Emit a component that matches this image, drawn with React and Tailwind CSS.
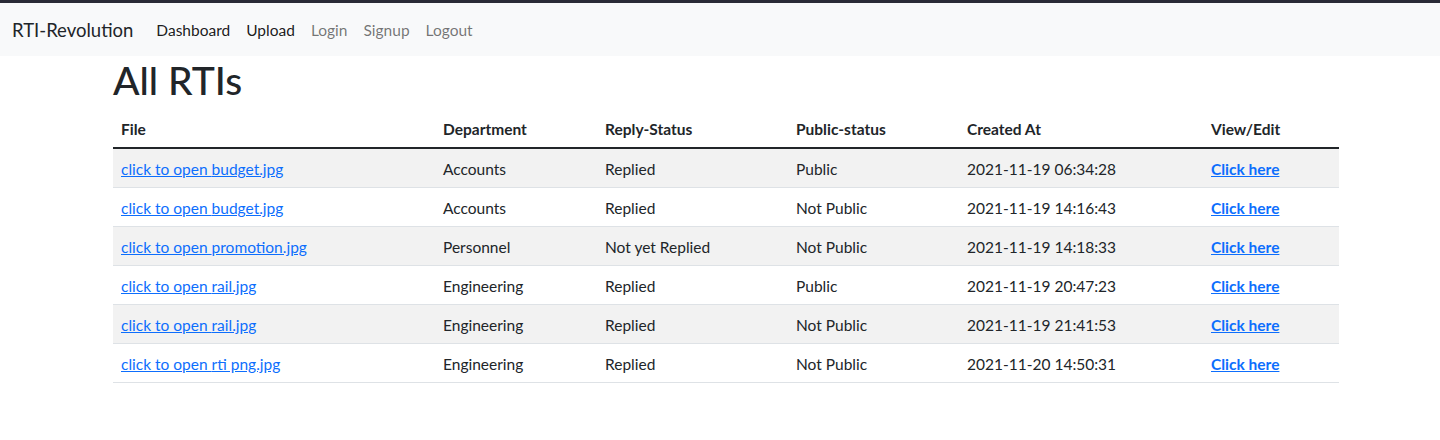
const rows = [
  { file: 'budget.jpg', dept: 'Accounts', reply: 'Replied', pub: 'Public', at: '2021-11-19 06:34:28' },
  { file: 'budget.jpg', dept: 'Accounts', reply: 'Replied', pub: 'Not Public', at: '2021-11-19 14:16:43' },
  { file: 'promotion.jpg', dept: 'Personnel', reply: 'Not yet Replied', pub: 'Not Public', at: '2021-11-19 14:18:33' },
  { file: 'rail.jpg', dept: 'Engineering', reply: 'Replied', pub: 'Public', at: '2021-11-19 20:47:23' },
  { file: 'rail.jpg', dept: 'Engineering', reply: 'Replied', pub: 'Not Public', at: '2021-11-19 21:41:53' },
  { file: 'rti png.jpg', dept: 'Engineering', reply: 'Replied', pub: 'Not Public', at: '2021-11-20 14:50:31' },
]

function Navbar() {
  return (
    <nav className="flex items-center h-[53px] pt-[2px] bg-[#f8f9fa] px-3">
      <a href="#" className="text-[18.5px] text-[#212529] mr-[23px]">RTI-Revolution</a>
      <div className="flex gap-4 text-[15.5px]">
        <a href="#" className="text-black/90">Dashboard</a>
        <a href="#" className="text-black/90">Upload</a>
        <a href="#" className="text-black/55">Login</a>
        <a href="#" className="text-black/55">Signup</a>
        <a href="#" className="text-black/55">Logout</a>
      </div>
    </nav>
  )
}

export default function App() {
  return (
    <div className="min-h-[440px] bg-white text-[#212529] font-['Lato','Open_Sans',sans-serif]">
      <div className="h-[3px] bg-[#2a2a36]"></div>
      <Navbar />
      <main className="ml-[113px] w-[1226px]">
        <h1 className="text-[39px] leading-[48px] font-medium mb-[3px]">All RTIs</h1>
        <table className="w-full border-collapse text-[15.5px]">
          <thead>
            <tr className="border-b-2 border-[#212529] text-left">
              <th className="w-[322px] px-2 pt-[11px] pb-[6px] font-bold">File</th>
              <th className="w-[162px] px-2 pt-[11px] pb-[6px] font-bold">Department</th>
              <th className="w-[191px] px-2 pt-[11px] pb-[6px] font-bold">Reply-Status</th>
              <th className="w-[171px] px-2 pt-[11px] pb-[6px] font-bold">Public-status</th>
              <th className="w-[244px] px-2 pt-[11px] pb-[6px] font-bold">Created At</th>
              <th className="px-2 pt-[11px] pb-[6px] font-bold">View/Edit</th>
            </tr>
          </thead>
          <tbody>
            {rows.map((r, i) => (
              <tr key={i} className={`border-b border-[#dee2e6] ${i % 2 === 0 ? 'bg-[#f2f2f2]' : 'bg-white'}`}>
                <td className="px-2 pt-[8px] pb-[6px] leading-6">
                  <a href="#" className="text-[#0d6efd] underline">click to open {r.file}</a>
                </td>
                <td className="px-2 pt-[8px] pb-[6px] leading-6">{r.dept}</td>
                <td className="px-2 pt-[8px] pb-[6px] leading-6">{r.reply}</td>
                <td className="px-2 pt-[8px] pb-[6px] leading-6">{r.pub}</td>
                <td className="px-2 pt-[8px] pb-[6px] leading-6">{r.at}</td>
                <td className="px-2 pt-[8px] pb-[6px] leading-6">
                  <a href="#" className="text-[#0d6efd] underline font-bold">Click here</a>
                </td>
              </tr>
            ))}
          </tbody>
        </table>
      </main>
    </div>
  )
}
